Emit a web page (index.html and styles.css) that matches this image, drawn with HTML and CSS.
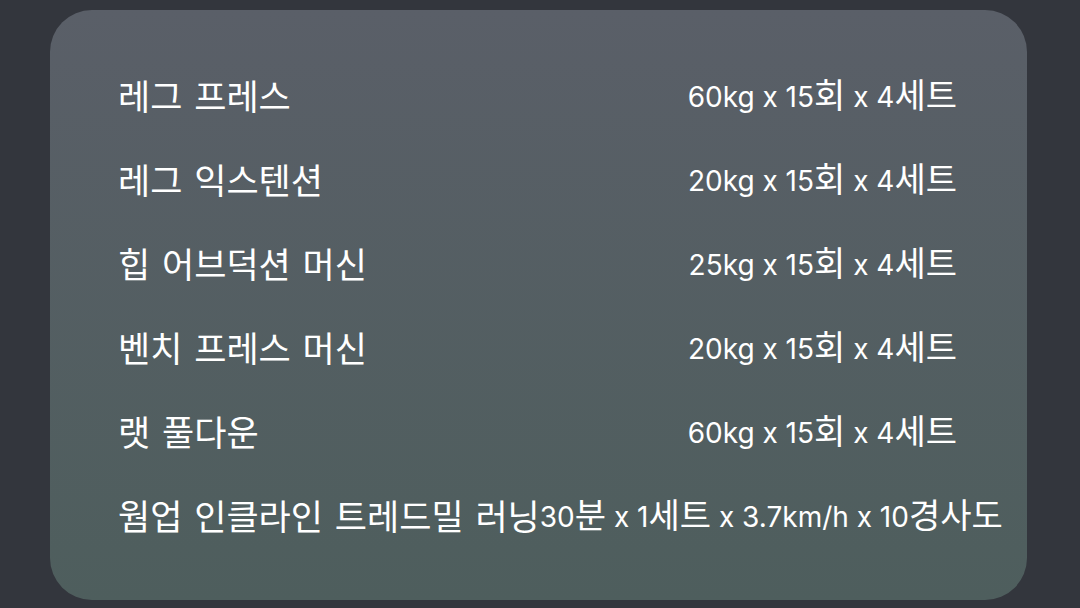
FILE: index.html
```html
<!DOCTYPE html>
<html lang="ko">
<head>
<meta charset="utf-8">
<link rel="stylesheet" href="styles.css">
</head>
<body>
<div class="card">
  <div class="row"><span class="name ko">레그 프레스</span><span class="value">60kg x 15<span class="ko">회</span> x 4<span class="ko">세트</span></span></div>
  <div class="row"><span class="name ko">레그 익스텐션</span><span class="value">20kg x 15<span class="ko">회</span> x 4<span class="ko">세트</span></span></div>
  <div class="row"><span class="name ko">힙 어브덕션 머신</span><span class="value">25kg x 15<span class="ko">회</span> x 4<span class="ko">세트</span></span></div>
  <div class="row"><span class="name ko">벤치 프레스 머신</span><span class="value">20kg x 15<span class="ko">회</span> x 4<span class="ko">세트</span></span></div>
  <div class="row"><span class="name ko">랫 풀다운</span><span class="value">60kg x 15<span class="ko">회</span> x 4<span class="ko">세트</span></span></div>
  <div class="row"><span class="name ko">웜업 인클라인 트레드밀 러닝</span><span class="value">30<span class="ko">분</span> x 1<span class="ko">세트</span> x 3.7km/h x 10<span class="ko">경사도</span></span></div>
</div>
</body>
</html>
```
FILE: styles.css
```css
html, body {
  margin: 0;
  height: 100%;
}
body {
  background: #33363d;
  padding: 10px 53px 8px 50px;
  box-sizing: border-box;
  font-family: Inter, "Noto Sans CJK KR", sans-serif;
  color: #ffffff;
}
.card {
  height: 100%;
  box-sizing: border-box;
  border-radius: 42px;
  background: linear-gradient(180deg, #5a5f68 0%, #4e5e5d 100%);
  padding: 43px 70px 43px 68px;
  display: flex;
  flex-direction: column;
}
.row {
  height: 84px;
  display: flex;
  align-items: center;
  justify-content: space-between;
  white-space: nowrap;
  font-size: 28px;
  line-height: 40px;
}
.name, .value {
  flex: none;
}
.ko {
  font-family: "Noto Sans CJK KR", sans-serif;
  font-size: 35px;
  word-spacing: 2px;
}
.value .ko {
  font-size: 34px;
  vertical-align: -1px;
}
```
